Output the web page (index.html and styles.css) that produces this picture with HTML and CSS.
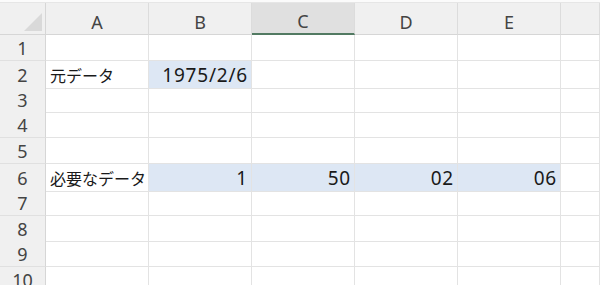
FILE: index.html
```html
<!DOCTYPE html>
<html lang="ja">
<head>
    <meta charset="UTF-8">
    <title>Sheet1</title>
    <link rel="stylesheet" href="styles.css">
</head>
<body>
    <div class="topbar"></div>
    <div class="sheet">
        <div class="row head">
            <div class="corner"><span class="tri"></span></div>
            <div class="col">A</div>
            <div class="col">B</div>
            <div class="col active">C</div>
            <div class="col">D</div>
            <div class="col">E</div>
            <div class="col"></div>
        </div>

        <div class="row"><div class="num">1</div><div class="cell"></div><div class="cell"></div><div class="cell"></div><div class="cell"></div><div class="cell"></div><div class="cell"></div></div>
        <div class="row"><div class="num">2</div><div class="cell ja">元データ</div><div class="cell fill right">1975/2/6</div><div class="cell"></div><div class="cell"></div><div class="cell"></div><div class="cell"></div></div>
        <div class="row"><div class="num">3</div><div class="cell"></div><div class="cell"></div><div class="cell"></div><div class="cell"></div><div class="cell"></div><div class="cell"></div></div>
        <div class="row"><div class="num">4</div><div class="cell"></div><div class="cell"></div><div class="cell"></div><div class="cell"></div><div class="cell"></div><div class="cell"></div></div>
        <div class="row"><div class="num">5</div><div class="cell"></div><div class="cell"></div><div class="cell"></div><div class="cell"></div><div class="cell"></div><div class="cell"></div></div>
        <div class="row"><div class="num">6</div><div class="cell ja">必要なデータ</div><div class="cell fill right">1</div><div class="cell fill right">50</div><div class="cell fill right">02</div><div class="cell fill right">06</div><div class="cell"></div></div>
        <div class="row"><div class="num">7</div><div class="cell"></div><div class="cell"></div><div class="cell"></div><div class="cell"></div><div class="cell"></div><div class="cell"></div></div>
        <div class="row"><div class="num">8</div><div class="cell"></div><div class="cell"></div><div class="cell"></div><div class="cell"></div><div class="cell"></div><div class="cell"></div></div>
        <div class="row"><div class="num">9</div><div class="cell"></div><div class="cell"></div><div class="cell"></div><div class="cell"></div><div class="cell"></div><div class="cell"></div></div>
        <div class="row"><div class="num">10</div><div class="cell"></div><div class="cell"></div><div class="cell"></div><div class="cell"></div><div class="cell"></div><div class="cell"></div></div>
    </div>
</body>
</html>
```

FILE: styles.css
```css
/* Excel-like sheet */
body {
    margin: 0;
    padding: 0;
    width: 600px;
    height: 285px;
    overflow: hidden;
    background-color: #ffffff;
    font-family: "Noto Sans", "Noto Sans CJK JP", sans-serif;
    color: #1a1a1a;
}

.topbar {
    height: 2px;
    background-color: #fbfbfb;
    border-bottom: 1px solid #e6e6e6;
}

.row {
    display: grid;
    grid-template-columns: 46px repeat(5, 103px) 1fr;
    height: 25.8px;
}

.row.head {
    height: 32px;
    background-color: #f0f0f0;
}

.corner {
    position: relative;
    border-right: 1px solid #d6d6d6;
    border-bottom: 1px solid #d6d6d6;
}

.tri {
    position: absolute;
    right: 3px;
    bottom: 3px;
    width: 0;
    height: 0;
    border-left: 18px solid transparent;
    border-bottom: 18px solid #d9d9d9;
}

.col {
    display: flex;
    justify-content: center;
    align-items: center;
    font-size: 18px;
    color: #444444;
    border-right: 1px solid #dcdcdc;
    border-bottom: 1px solid #d6d6d6;
    padding-top: 6px;
    box-sizing: border-box;
}

.col.active {
    background-color: #e0e0e0;
    border-bottom: 2px solid #527a62;
}

.num {
    display: flex;
    justify-content: center;
    align-items: center;
    background-color: #f0f0f0;
    border-right: 1px solid #d6d6d6;
    border-bottom: 1px solid #e0e0e0;
    font-size: 18px;
    color: #444444;
    box-sizing: border-box;
    padding-top: 1px;
}

.cell {
    display: flex;
    align-items: center;
    padding: 1px 4px 0 4px;
    font-size: 19px;
    white-space: nowrap;
    border-right: 1px solid #e3e3e3;
    border-bottom: 1px solid #e3e3e3;
    box-sizing: border-box;
}

.cell.ja {
    font-family: "Noto Sans CJK JP", sans-serif;
    font-size: 16px;
    padding-top: 2px;
}

.cell.fill {
    background-color: #dde7f4;
    letter-spacing: 0.8px;
    padding-right: 3px;
}

.cell.right {
    justify-content: flex-end;
}
```
